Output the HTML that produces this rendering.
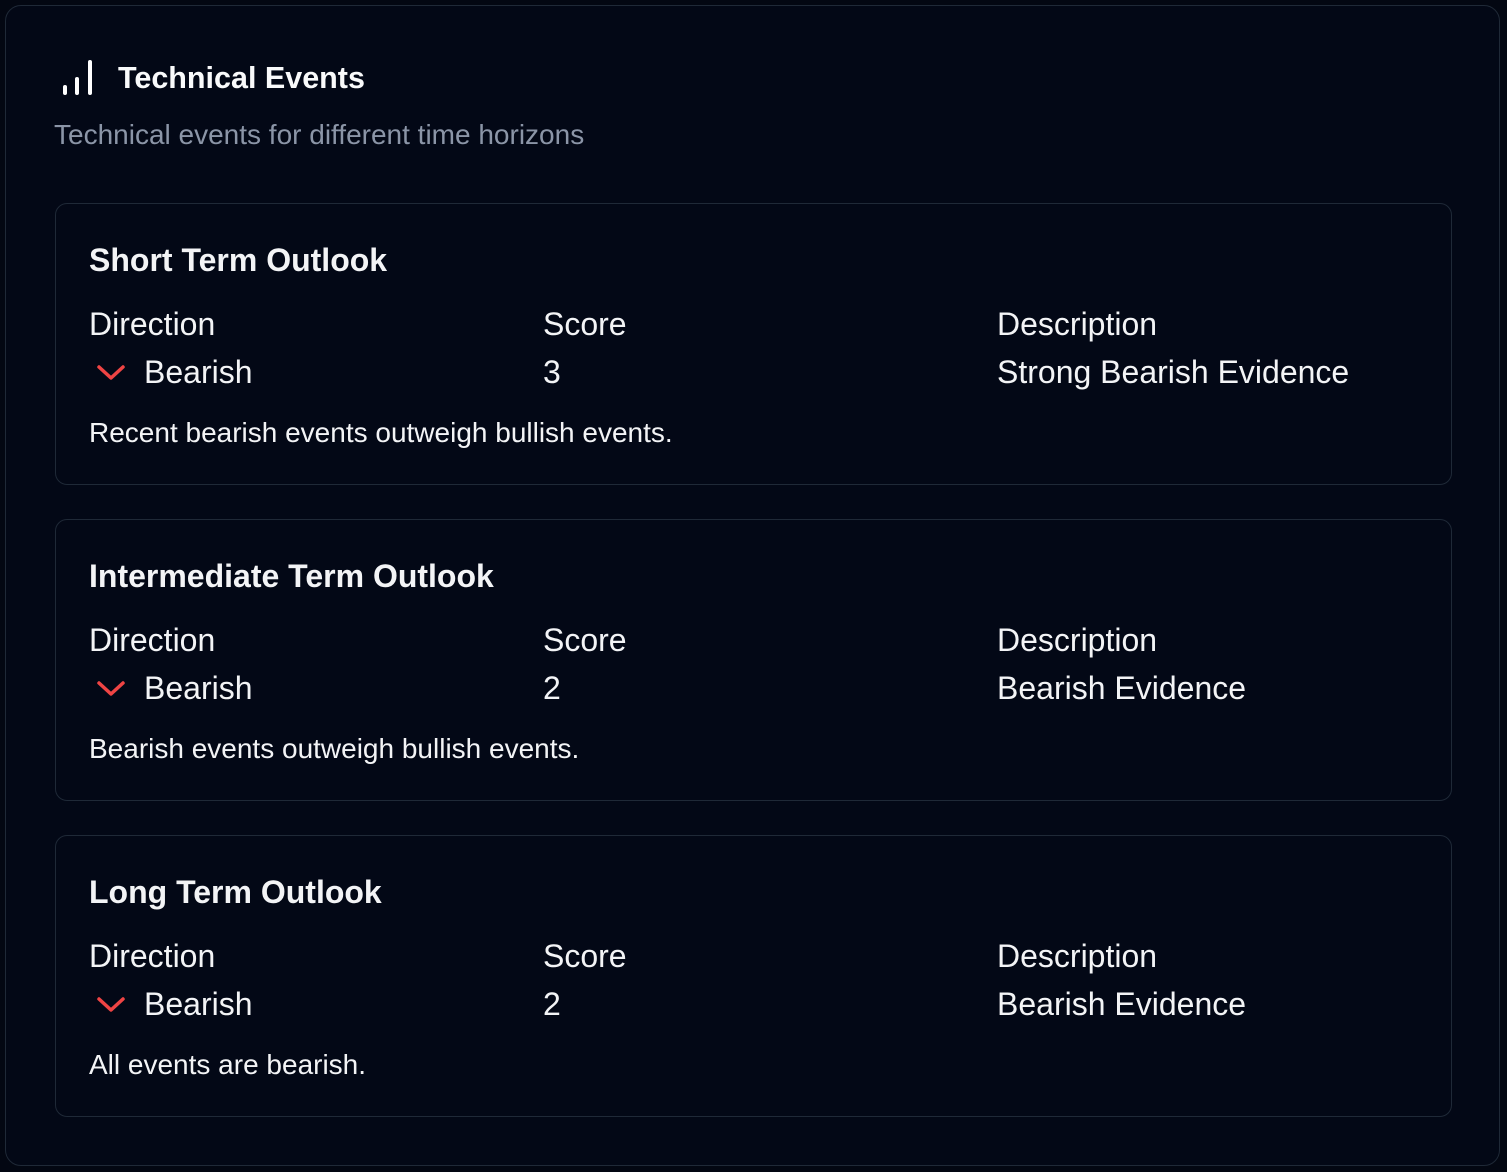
<!DOCTYPE html>
<html><head><style>
html,body{margin:0;padding:0;background:#030712;width:1507px;height:1172px;overflow:hidden;font-family:"Liberation Sans",Arial,sans-serif;color:#f3f4f6}
.outer{position:absolute;left:5px;top:5px;width:1495px;height:1161px;border:1.5px solid #1f2937;border-radius:16px;box-sizing:border-box;background:#030816}
.hdr{position:absolute;left:62px;top:58px;display:flex;align-items:center}
.hdr h1{margin:0 0 0 24px;font-size:30.5px;font-weight:bold;color:#f9fafb;line-height:40px}
.sub{position:absolute;left:54px;top:118px;font-size:28px;line-height:34px;color:#8b95a7}
.card{position:absolute;left:55px;width:1397px;height:282px;border:1.5px solid #1f2937;border-radius:12px;box-sizing:border-box}
.card h2{position:absolute;left:33px;top:37px;margin:0;font-size:32px;font-weight:bold;line-height:38px}
.lab{position:absolute;top:101px;font-size:32px;line-height:38px}
.val{position:absolute;top:149px;font-size:32px;line-height:38px}
.val svg{vertical-align:middle;margin-right:18px;position:relative;top:-3px}
.txt{position:absolute;left:33px;top:212px;font-size:28px;line-height:34px}
</style></head><body>
<div class="outer"></div>
<div class="hdr"><svg width="32" height="38" viewBox="0 0 32 38"><g stroke="#fff" stroke-width="4" stroke-linecap="round"><line x1="3" y1="28" x2="3" y2="34"/><line x1="15" y1="20" x2="15" y2="34"/><line x1="28" y1="3" x2="28" y2="34"/></g></svg><h1>Technical Events</h1></div>
<div class="sub">Technical events for different time horizons</div>

<div class="card" style="top:203px">
<h2>Short Term Outlook</h2>
<div class="lab" style="left:33px">Direction</div><div class="lab" style="left:487px">Score</div><div class="lab" style="left:941px">Description</div>
<div class="val" style="left:40px"><svg width="30" height="20" viewBox="0 0 30 20"><polyline points="3,5 15,16 27,5" fill="none" stroke="#ef4444" stroke-width="3.5" stroke-linecap="round" stroke-linejoin="round"/></svg>Bearish</div>
<div class="val" style="left:487px">3</div><div class="val" style="left:941px">Strong Bearish Evidence</div>
<div class="txt">Recent bearish events outweigh bullish events.</div>
</div>

<div class="card" style="top:519px">
<h2>Intermediate Term Outlook</h2>
<div class="lab" style="left:33px">Direction</div><div class="lab" style="left:487px">Score</div><div class="lab" style="left:941px">Description</div>
<div class="val" style="left:40px"><svg width="30" height="20" viewBox="0 0 30 20"><polyline points="3,5 15,16 27,5" fill="none" stroke="#ef4444" stroke-width="3.5" stroke-linecap="round" stroke-linejoin="round"/></svg>Bearish</div>
<div class="val" style="left:487px">2</div><div class="val" style="left:941px">Bearish Evidence</div>
<div class="txt">Bearish events outweigh bullish events.</div>
</div>

<div class="card" style="top:835px">
<h2>Long Term Outlook</h2>
<div class="lab" style="left:33px">Direction</div><div class="lab" style="left:487px">Score</div><div class="lab" style="left:941px">Description</div>
<div class="val" style="left:40px"><svg width="30" height="20" viewBox="0 0 30 20"><polyline points="3,5 15,16 27,5" fill="none" stroke="#ef4444" stroke-width="3.5" stroke-linecap="round" stroke-linejoin="round"/></svg>Bearish</div>
<div class="val" style="left:487px">2</div><div class="val" style="left:941px">Bearish Evidence</div>
<div class="txt">All events are bearish.</div>
</div>
</body></html>
